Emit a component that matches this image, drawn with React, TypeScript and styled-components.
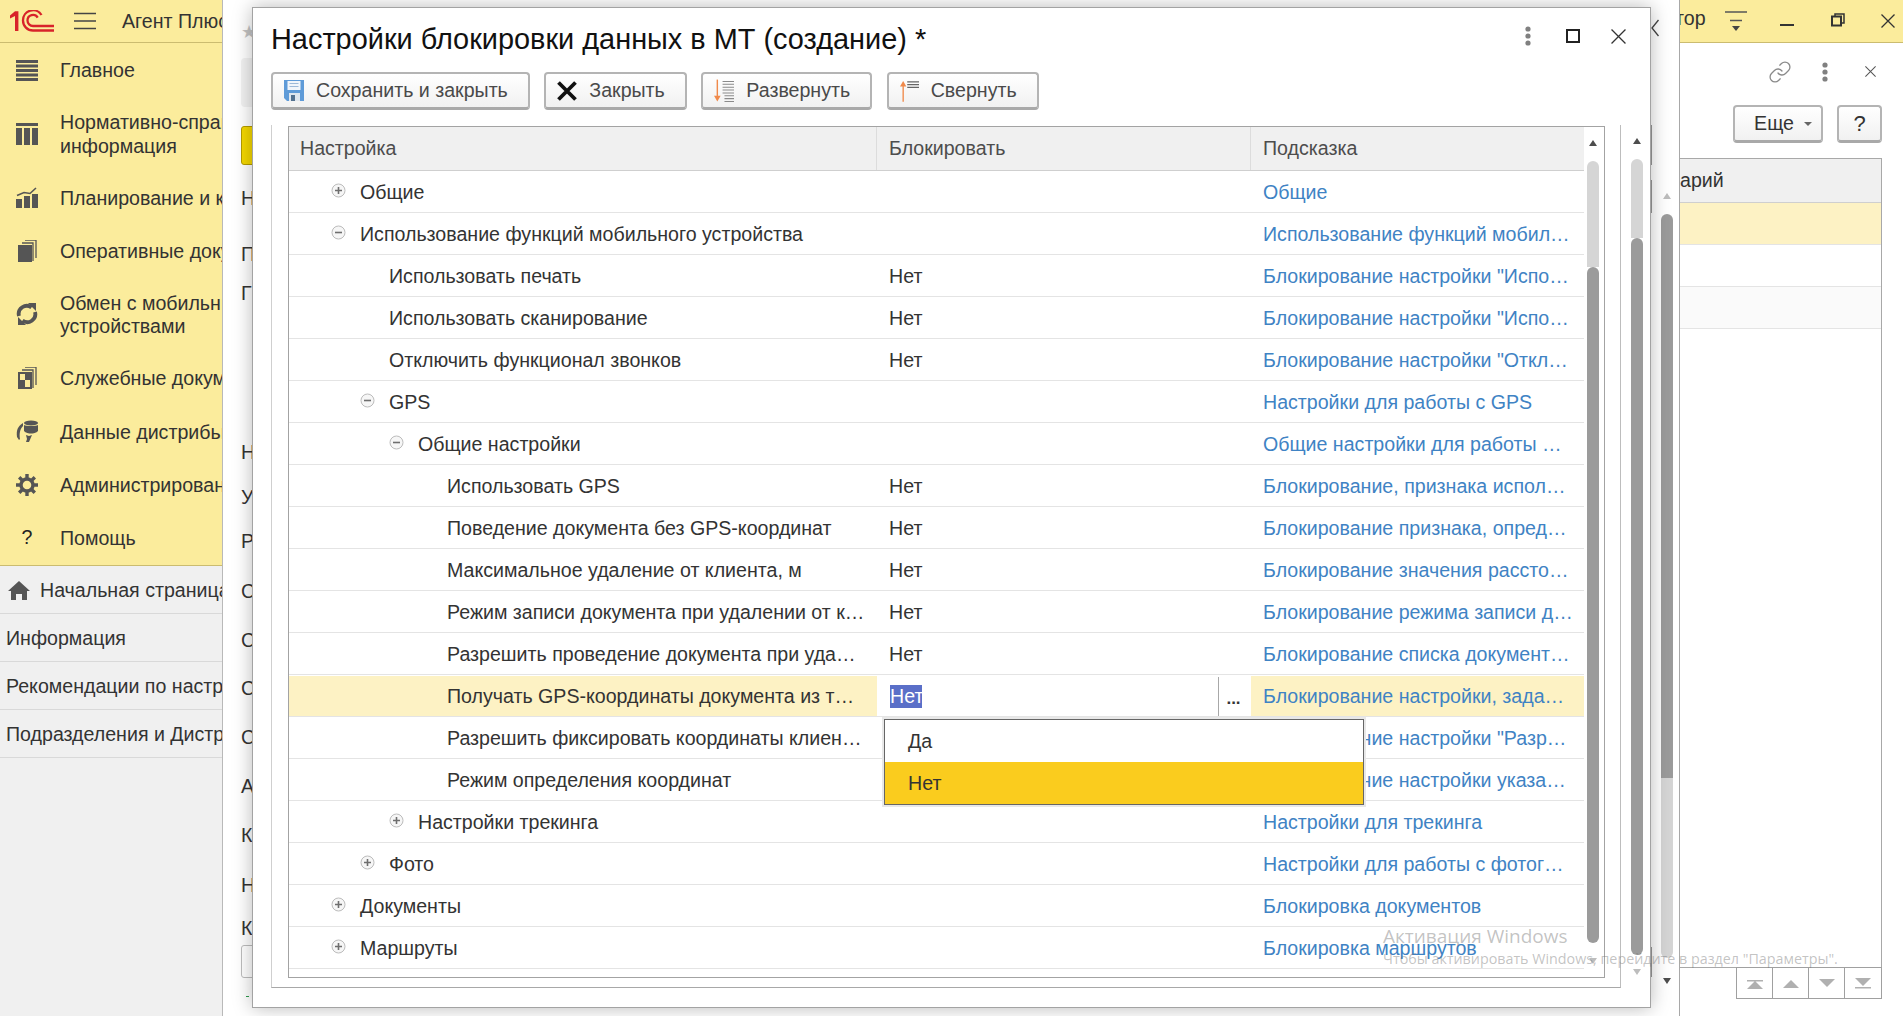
import React from "react";
import styled, { createGlobalStyle } from "styled-components";
import { Link as LinkIcon } from "lucide-react";

const Global = createGlobalStyle`
  html, body { margin: 0; padding: 0; width: 1903px; height: 1016px; overflow: hidden; background: #fff; }
  #root { width: 1903px; height: 1016px; }
  * { box-sizing: border-box; }
`;

const FONT = `"Liberation Sans", Arial, sans-serif`;
const TEXT = "#333333";
const LINE = "#e4e4e4";

const Page = styled.div`
  position: relative;
  display: flex;
  width: 1903px;
  height: 1016px;
  overflow: hidden;
  font-family: ${FONT};
  font-size: 19.6px;
  color: ${TEXT};
`;

/* ---------- sidebar ---------- */
const Sidebar = styled.aside`
  width: 223px;
  flex: none;
  display: flex;
  flex-direction: column;
  background: #f0f0f0;
  border-right: 1px solid #b9b9b9;
  overflow: hidden;
`;
const AppBar = styled.div`
  height: 43px;
  flex: none;
  display: flex;
  align-items: center;
  background: #fbec9c;
  border-bottom: 1px solid #cbbc70;
  padding-left: 10px;
  white-space: nowrap;
`;
const Burger = styled.svg`
  margin-left: 20px;
  margin-right: 26px;
  flex: none;
`;
const Nav = styled.nav`
  background: #fbec9c;
  height: 523px;
  flex: none;
  border-bottom: 1px solid #cbbc70;
`;
const NavItem = styled.div<{ $tall?: boolean }>`
  height: ${(p) => (p.$tall ? "74px" : "53.3px")};
  display: flex;
  align-items: center;
  gap: 22px;
  padding: 1px 0 0 16px;
  white-space: nowrap;
  line-height: 23.5px;
`;
const NavLabel = styled.span`
  padding-top: 2px;
`;
const NavGlyph = styled.svg`
  flex: none;
  width: 22px;
  height: 22px;
  color: #555;
`;
const HelpMark = styled.span`
  width: 22px;
  flex: none;
  text-align: center;
  color: #222;
`;
const Tab = styled.div`
  height: 48px;
  flex: none;
  display: flex;
  align-items: center;
  gap: 10px;
  padding: 1px 0 0 6px;
  border-bottom: 1px solid #d9d9d9;
  white-space: nowrap;
`;

/* ---------- background panel ---------- */
const Middle = styled.main`
  flex: 1;
  display: flex;
  justify-content: space-between;
  background: #fff;
  min-width: 0;
`;
const BackForm = styled.div`
  width: 40px;
  padding-left: 18px;
  display: flex;
  flex-direction: column;
`;
const BackStar = styled.span`
  margin-top: 22px;
  height: 20px;
  color: #c4c4c4;
  font-size: 18px;
  line-height: 20px;
`;
const BackBar = styled.div`
  margin-top: 16px;
  height: 49px;
  width: 30px;
  background: #f2f2f2;
  border-radius: 4px;
`;
const BackButton = styled.div`
  margin-top: 19px;
  height: 39px;
  width: 30px;
  background: #f5d800;
  border: 1px solid #b49c00;
  border-radius: 3px;
`;
const BackLetter = styled.div<{ $gap: number }>`
  margin-top: ${(p) => p.$gap}px;
  height: 24px;
  line-height: 24px;
`;
const BackInput = styled.div`
  margin-top: 5px;
  height: 33px;
  width: 30px;
  border: 1px solid #bdbdbd;
  border-radius: 3px;
`;
const BackDash = styled.div`
  margin: 18px 0 0 5px;
  width: 3px;
  height: 1px;
  background: #2e9c4e;
`;

const BackRail = styled.div`
  width: 28px;
  flex: none;
  display: flex;
  flex-direction: column;
  position: relative;
`;
const BackChevron = styled.svg`
  position: absolute;
  left: 0;
  top: 19px;
`;
const BackEdge = styled.div<{ $top: number; $h: number }>`
  position: absolute;
  left: 0;
  top: ${(p) => p.$top}px;
  width: 1px;
  height: ${(p) => p.$h}px;
  background: #9a9a9a;
`;
const BackScroll = styled.div`
  margin-top: 193px;
  padding-left: 10px;
`;

/* ---------- scrollbars ---------- */
const Scroll = styled.div<{ $pad: number }>`
  width: 12px;
  margin-left: ${(p) => p.$pad}px;
  display: flex;
  flex-direction: column;
  align-items: center;
`;
const Arrow = styled.div<{ $down?: boolean; $off?: boolean }>`
  width: 0;
  height: 0;
  border-left: 4px solid transparent;
  border-right: 4px solid transparent;
  ${(p) => (p.$down ? "border-top" : "border-bottom")}: 6px solid ${(p) => (p.$off ? "#bdbdbd" : "#4d4d4d")};
`;
const Lane = styled.div<{ $before: number; $after: number }>`
  width: 12px;
  display: flex;
  flex-direction: column;
  margin: ${(p) => p.$before}px 0 ${(p) => p.$after}px;
`;
const LaneLight = styled.div<{ $h: number; $atTop?: boolean }>`
  height: ${(p) => p.$h}px;
  background: #d5d5d5;
  border-radius: ${(p) => (p.$atTop ? "6px 6px 0 0" : "0 0 6px 6px")};
`;
const LaneDark = styled.div<{ $h: number; $roundBottom?: boolean }>`
  height: ${(p) => p.$h}px;
  background: #9b9b9b;
  border-radius: 6px 6px ${(p) => (p.$roundBottom ? "6px 6px" : "0 0")};
`;

/* ---------- right panel ---------- */
const Right = styled.section`
  width: 224px;
  flex: none;
  border-left: 1px solid #a8a8a8;
  display: flex;
  flex-direction: column;
  background: #fff;
`;
const RightBar = styled.div`
  height: 43px;
  flex: none;
  background: #fbec9c;
  border-bottom: 1px solid #cbbc70;
  display: grid;
  grid-template-columns: 45px 55px 51px 50px 22px;
  align-items: center;
  overflow: hidden;
`;
const RightBarText = styled.span`
  margin: 0 0 5px -5px;
  white-space: nowrap;
`;
const RightTools = styled.div`
  height: 62px;
  flex: none;
  padding: 0 27px 5px 0;
  display: flex;
  justify-content: flex-end;
  align-items: center;
  gap: 30px;
`;
const CloseSpacer = styled.span`
  display: flex;
  margin-left: 7px;
`;
const RightActions = styled.div`
  height: 38px;
  flex: none;
  padding-right: 21px;
  display: flex;
  justify-content: flex-end;
  gap: 14px;
`;
const RightTable = styled.div`
  flex: 1;
  margin: 15px 21px 0 0;
  border-top: 1px solid #a8a8a8;
  border-right: 1px solid #a8a8a8;
  border-bottom: 1px solid #a8a8a8;
  overflow: hidden;
`;
const RightHead = styled.div`
  height: 44px;
  background: #f0f0f0;
  border-bottom: 1px solid #cfcfcf;
  line-height: 43px;
`;
const RightRow = styled.div<{ $bg: string }>`
  height: 42px;
  background: ${(p) => p.$bg};
  border-bottom: 1px solid ${LINE};
`;
const Pager = styled.div`
  align-self: flex-end;
  margin-right: 21px;
  height: 32px;
  margin-bottom: 17px;
  display: grid;
  grid-template-columns: repeat(4, 36px);
  margin-top: -1px;
  border: 1px solid #a0a0a0;
`;
const PagerCell = styled.div`
  display: flex;
  align-items: center;
  justify-content: center;
  border-right: 1px solid #a0a0a0;
  &:last-child { border-right: 0; }
`;

/* ---------- modal ---------- */
const Modal = styled.div`
  position: absolute;
  left: 252px;
  top: 7px;
  width: 1399px;
  height: 1001px;
  background: #fff;
  border: 1px solid #a3a3a3;
  box-shadow: 0 0 18px rgba(0, 0, 0, 0.28);
  display: flex;
  flex-direction: column;
`;
const TitleRow = styled.div`
  height: 64px;
  flex: none;
  display: flex;
  align-items: center;
  padding: 0 24px 2px 18px;
`;
const Title = styled.h1`
  margin: 0;
  flex: 1;
  font-weight: 400;
  font-size: 28.9px;
  color: #111;
`;
const WindowButtons = styled.div`
  display: flex;
  align-items: center;
  gap: 31px;
  padding-bottom: 6px;
  & > :first-child { margin-right: 4px; }
`;
const Toolbar = styled.div`
  height: 38px;
  flex: none;
  display: flex;
  gap: 14.5px;
  padding-left: 18px;
`;
const Button = styled.div`
  height: 38px;
  display: flex;
  align-items: center;
  gap: 12px;
  padding: 0 20px 0 11px;
  border: 2px solid #b4b4b4;
  border-bottom: 3px solid #a9a9a9;
  border-radius: 4px;
  background: linear-gradient(#ffffff, #f1f1f1);
  color: #4a4a4a;
  white-space: nowrap;
`;
const PlainButton = styled(Button)<{ $w: number; $pl?: number; $big?: boolean }>`
  width: ${(p) => p.$w}px;
  padding: 0 0 0 ${(p) => p.$pl || 0}px;
  justify-content: center;
  gap: 10px;
  color: #333;
  font-size: ${(p) => (p.$big ? "22px" : "inherit")};
`;
const Caret = styled.span`
  width: 0;
  height: 0;
  border-left: 4px solid transparent;
  border-right: 4px solid transparent;
  border-top: 4px solid #666;
`;
const ModalBody = styled.div`
  flex: 1;
  display: flex;
  margin: 15px 0 19px 18px;
  min-height: 0;
`;
const Frame = styled.div`
  width: 1350px;
  flex: none;
  padding: 1px 15px 9px 16px;
  border-left: 1px solid #cfcfcf;
  border-right: 1px solid #bdbdbd;
  border-bottom: 1px solid #a8a8a8;
`;
const TableBox = styled.div`
  height: 100%;
  display: flex;
  border: 1px solid #a3a3a3;
  background: #fff;
`;
const Grid = styled.div`
  width: 1295px;
  flex: none;
  position: relative;
`;
const COLS = "588px 374px 333px";
const HeadRow = styled.div`
  height: 44px;
  display: grid;
  grid-template-columns: ${COLS};
  background: #f0f0f0;
  border-bottom: 1px solid #cfcfcf;
`;
const HeadCell = styled.div`
  display: flex;
  align-items: center;
  padding-left: 12px;
  color: #4d4d4d;
  border-right: 1px solid #dcdcdc;
  &:first-child { padding-left: 11px; }
  &:last-child { border-right: 0; }
`;
const Row = styled.div`
  height: 42px;
  display: grid;
  grid-template-columns: ${COLS};
  border-bottom: 1px solid ${LINE};
`;
const Cell = styled.div<{ $active?: boolean }>`
  display: flex;
  align-items: center;
  min-width: 0;
  overflow: hidden;
  white-space: nowrap;
  margin: 1px 0 0;
  padding-top: 1px;
  background: ${(p) => (p.$active ? "#fdf2c4" : "transparent")};
`;
const NameCell = styled(Cell)<{ $level: number }>`
  padding-left: ${(p) => 71 + p.$level * 29}px;
  position: relative;
`;
const Toggle = styled.svg`
  position: absolute;
  margin-left: -29px;
  margin-top: -4px;
`;
const ValueCell = styled(Cell)`
  padding-left: 12px;
`;
const HintCell = styled(Cell)`
  padding-left: 12px;
  color: #3f83c4;
`;
const EditorCell = styled(Cell)`
  padding-left: 13px;
  padding-top: 0;
  background: #fff;
`;
const Selected = styled.span`
  flex: none;
  width: 32px;
  height: 23px;
  line-height: 23px;
  background: #5a6fc8;
  color: #fff;
  margin-right: 296px;
  overflow: hidden;
`;
const EditorPick = styled.div`
  flex: none;
  width: 32px;
  height: 39px;
  padding-right: 2px;
  border-left: 1px solid #a8a8a8;
  text-align: center;
  font-weight: 700;
  font-size: 17px;
  line-height: 44px;
  color: #333;
`;
const Dropdown = styled.div`
  position: absolute;
  left: 595px;
  top: 592px;
  width: 480px;
  height: 86px;
  background: #fff;
  border: 1px solid #666;
  box-shadow: 0 0 0 2px #e8e8e8;
  z-index: 2;
`;
const DropItem = styled.div<{ $on?: boolean }>`
  height: 42px;
  padding-left: 23px;
  display: flex;
  align-items: center;
  background: ${(p) => (p.$on ? "#facc1e" : "#fff")};
`;
const TableRail = styled.div`
  width: 20px;
  flex: none;
  padding-top: 13px;
`;
const ModalRail = styled.div`
  width: 29px;
  flex: none;
  padding-top: 13px;
`;

/* ---------- watermark ---------- */
const Watermark = styled.div`
  position: absolute;
  left: 1383px;
  top: 923px;
  z-index: 5;
  pointer-events: none;
  font-family: "Open Sans", ${FONT};
  color: rgba(110, 110, 110, 0.42);
  white-space: nowrap;
`;
const WmTitle = styled.div`
  font-size: 19px;
  line-height: 26px;
`;
const WmText = styled.div`
  font-size: 14.3px;
  line-height: 20px;
`;

/* ---------- drawings ---------- */
const Logo = () => (
  <svg width="44" height="22" viewBox="10 8 44 22" fill="none" style={{ flex: "none" }}>
    <path d="M10 13.5 15 9.2h3.400V29H15V14l-5 2.400z" fill="#d8232a" />
    <path d="M41.500 13A10 10 0 0 0 23 18.500 10 10 0 0 0 33 28.500H54" stroke="#d8232a" strokeWidth="2.300" />
    <path d="M37.700 15.600A5.500 5.500 0 0 0 27.500 18.500 5.500 5.500 0 0 0 33 24H54" stroke="#d8232a" strokeWidth="2.300" />
  </svg>
);
const IconMain = () => (
  <NavGlyph viewBox="0 0 22 22" fill="currentColor">
    <rect y="1" width="22" height="3" /><rect y="5.5" width="22" height="3" /><rect y="10" width="22" height="3" /><rect y="14.5" width="22" height="3" /><rect y="19" width="22" height="3" />
  </NavGlyph>
);
const IconRef = () => (
  <NavGlyph viewBox="0 0 22 22" fill="currentColor">
    <rect y="0" width="22" height="3" />
    <rect y="5" width="6" height="17" /><rect x="8" y="5" width="6" height="17" /><rect x="16" y="5" width="6" height="17" />
  </NavGlyph>
);
const IconPlan = () => (
  <NavGlyph viewBox="0 0 22 22" fill="currentColor">
    <rect y="13" width="6" height="9" /><rect x="8" y="10" width="6" height="12" /><rect x="16" y="8" width="6" height="14" />
    <path d="M1 9.5 8 6.5l6 1L20 2" fill="none" stroke="currentColor" strokeWidth="1.6" />
  </NavGlyph>
);
const IconDocs = () => (
  <NavGlyph viewBox="0 0 22 22" fill="currentColor">
    <rect x="2" y="5" width="14" height="17" />
    <path d="M17 21V3H6M20 18V0H9" fill="none" stroke="currentColor" strokeWidth="1.3" />
  </NavGlyph>
);
const IconSync = () => (
  <NavGlyph viewBox="0 0 22 22" fill="none">
    <path d="M3 13A8 8 0 0 1 15.5 4.5" stroke="currentColor" strokeWidth="3.8" />
    <path d="M19 9A8 8 0 0 1 6.5 17.5" stroke="currentColor" strokeWidth="3.8" />
    <path d="M12 0h8v8zM10 22H2v-8z" fill="currentColor" />
  </NavGlyph>
);
const IconService = () => (
  <NavGlyph viewBox="0 0 22 22" fill="currentColor">
    <path fillRule="evenodd" d="M2 5h14v17H2zM4 7v6h5V7zM9 13v7h5v-7z" />
    <path d="M17 21V3H6M20 18V0H9" fill="none" stroke="currentColor" strokeWidth="1.3" />
  </NavGlyph>
);
const IconData = () => (
  <NavGlyph viewBox="0 0 22 22" fill="currentColor">
    <ellipse cx="15" cy="3" rx="7" ry="2.6" />
    <path d="M8 5c2 1.4 12 1.4 14 0v6c-1.5 2-5 2.6-7 2.6S9.500 13 8 11z" />
    <path d="M7 3C2 6 0 10 1 17l2 3 1-1c-1-5 0-10 3-13z" />
    <path d="M10 15l3 1 3-1-3 7h-3l1-3z" />
  </NavGlyph>
);
const IconGear = () => (
  <NavGlyph viewBox="0 0 22 22" fill="none">
    <circle cx="11" cy="11" r="6" stroke="currentColor" strokeWidth="3.4" />
    <path d="M11 0v5M11 17v5M0 11h5M17 11h5M3.200 3.200l3.500 3.500M15.300 15.300l3.500 3.500M3.200 18.800l3.500-3.500M15.300 6.700l3.500-3.500" stroke="currentColor" strokeWidth="3.400" />
  </NavGlyph>
);
const IconHome = () => (
  <svg width="22" height="19" viewBox="0 0 22 19" fill="#555" style={{ flex: "none", marginLeft: 2 }}>
    <path d="M11 0 22 10h-3v9h-5v-6H8v6H3v-9H0z" />
  </svg>
);
const IconSave = () => (
  <svg width="20" height="21" viewBox="0 0 20 21" style={{ flex: "none" }}>
    <path d="M0 0h20v21H3l-3-3z" fill="#5f9bd8" />
    <rect x="3.500" y="1" width="13" height="9" fill="#f1f5fa" />
    <path d="M5.500 3.500h9M5.500 6.500h9" stroke="#9db9d8" strokeWidth="1" />
    <rect x="5" y="13" width="11" height="8" fill="#dfe6ee" />
    <rect x="7" y="15" width="4" height="6" fill="#53718f" />
  </svg>
);
const IconClose = () => (
  <svg width="20" height="20" viewBox="0 0 20 20" style={{ flex: "none" }}>
    <path d="M1.500 1.500 18.500 18.500M18.500 1.500 1.500 18.500" stroke="#111" strokeWidth="3.800" />
  </svg>
);
const IconExpand = () => (
  <svg width="20" height="24" viewBox="0 0 21 24" style={{ flex: "none" }}>
    <path d="M3.500 0v18" stroke="#f08a4b" strokeWidth="1.500" />
    <path d="M0 17h7l-3.500 6z" fill="#f08a4b" />
    <path d="M9 2h12M9 5h12M9 8h12M9 11h12M9 14h12M11 17h10M11 20h10M11 23h10" stroke="#8a8a8a" strokeWidth="1.100" />
  </svg>
);
const IconCollapse = () => (
  <svg width="19" height="24" viewBox="0 0 21 24" style={{ flex: "none" }}>
    <path d="M3.500 6v18" stroke="#f08a4b" strokeWidth="1.500" />
    <path d="M0 7h7L3.500 1z" fill="#f08a4b" />
    <path d="M8 2h13M8 5h13M8 8h13" stroke="#666" strokeWidth="1.300" />
  </svg>
);
const ToggleIcon = ({ open }: { open: boolean }) => (
  <Toggle width="15" height="15" viewBox="0 0 15 15">
    <circle cx="7.500" cy="7.500" r="6.500" fill="#f6f6f6" stroke="#bcbcbc" />
    <path d={open ? "M4 7.500h7" : "M4 7.500h7M7.500 4v7"} stroke="#6e6e6e" strokeWidth="1.600" />
  </Toggle>
);
const Dots = ({ gap = 7 }: { gap?: number }) => (
  <svg width="6" height={2 * gap + 6} viewBox={`0 0 6 ${2 * gap + 6}`} fill="#808080" style={{ flex: "none" }}>
    <circle cx="3" cy="3" r="2.600" /><circle cx="3" cy={3 + gap} r="2.600" /><circle cx="3" cy={3 + 2 * gap} r="2.600" />
  </svg>
);
const Cross = ({ size, color, w }: { size: number; color: string; w: number }) => (
  <svg width={size} height={size} viewBox="0 0 14 14" style={{ flex: "none" }}>
    <path d="M.5.500l13 13M13.500.500l-13 13" stroke={color} strokeWidth={w} />
  </svg>
);
const PagerGlyph = ({ d }: { d: string }) => (
  <svg width="16" height="11" viewBox="0 0 16 11" fill="#b0b0b0"><path d={d} /></svg>
);

const backLetters: [string, number][] = [
  ["Н", 21], ["П", 32], ["Г", 15], ["Н", 135], ["У", 21], ["Р", 20], ["С", 26], ["С", 25], ["С", 24],
  ["С", 25], ["А", 25], ["К", 25], ["Н", 26], ["К", 19],
];

type R = { level: number; toggle?: "open" | "closed"; name: string; value?: string; hint: string };
const rows: R[] = [
  { level: 0, toggle: "closed", name: "Общие", hint: "Общие" },
  { level: 0, toggle: "open", name: "Использование функций мобильного устройства", hint: "Использование функций мобил…" },
  { level: 1, name: "Использовать печать", value: "Нет", hint: "Блокирование настройки \"Испо…" },
  { level: 1, name: "Использовать сканирование", value: "Нет", hint: "Блокирование настройки \"Испо…" },
  { level: 1, name: "Отключить функционал звонков", value: "Нет", hint: "Блокирование настройки \"Откл…" },
  { level: 1, toggle: "open", name: "GPS", hint: "Настройки для работы с GPS" },
  { level: 2, toggle: "open", name: "Общие настройки", hint: "Общие настройки для работы …" },
  { level: 3, name: "Использовать GPS", value: "Нет", hint: "Блокирование, признака испол…" },
  { level: 3, name: "Поведение документа без GPS-координат", value: "Нет", hint: "Блокирование признака, опред…" },
  { level: 3, name: "Максимальное удаление от клиента, м", value: "Нет", hint: "Блокирование значения рассто…" },
  { level: 3, name: "Режим записи документа при удалении от к…", value: "Нет", hint: "Блокирование режима записи д…" },
  { level: 3, name: "Разрешить проведение документа при уда…", value: "Нет", hint: "Блокирование списка документ…" },
  { level: 3, name: "Получать GPS-координаты документа из т…", value: "Нет", hint: "Блокирование настройки, зада…" },
  { level: 3, name: "Разрешить фиксировать координаты клиен…", hint: "Блокирование настройки \"Разр…" },
  { level: 3, name: "Режим определения координат", hint: "Блокирование настройки указа…" },
  { level: 2, toggle: "closed", name: "Настройки трекинга", hint: "Настройки для трекинга" },
  { level: 1, toggle: "closed", name: "Фото", hint: "Настройки для работы с фотог…" },
  { level: 0, toggle: "closed", name: "Документы", hint: "Блокировка документов" },
  { level: 0, toggle: "closed", name: "Маршруты", hint: "Блокировка маршрутов" },
];
const ACTIVE = 12;

export default function App() {
  return (
    <Page>
      <Global />
      <Sidebar>
        <AppBar>
          <Logo />
          <Burger width="22" height="18" viewBox="0 0 22 18">
            <path d="M0 1.500h22M0 9h22M0 16.500h22" stroke="#444" strokeWidth="1.300" />
          </Burger>
          Агент Плюс
        </AppBar>
        <Nav>
          <NavItem><IconMain /><NavLabel>Главное</NavLabel></NavItem>
          <NavItem $tall><IconRef /><NavLabel>Нормативно-справочная<br />информация</NavLabel></NavItem>
          <NavItem><IconPlan /><NavLabel>Планирование и контроль</NavLabel></NavItem>
          <NavItem><IconDocs /><NavLabel>Оперативные документы</NavLabel></NavItem>
          <NavItem $tall><IconSync /><NavLabel>Обмен с мобильными<br />устройствами</NavLabel></NavItem>
          <NavItem><IconService /><NavLabel>Служебные документы</NavLabel></NavItem>
          <NavItem><IconData /><NavLabel>Данные дистрибьюторов</NavLabel></NavItem>
          <NavItem><IconGear /><NavLabel>Администрирование</NavLabel></NavItem>
          <NavItem><HelpMark>?</HelpMark><NavLabel>Помощь</NavLabel></NavItem>
        </Nav>
        <Tab><IconHome />Начальная страница</Tab>
        <Tab>Информация</Tab>
        <Tab>Рекомендации по настройке</Tab>
        <Tab>Подразделения и Дистрибьюторы</Tab>
      </Sidebar>

      <Middle>
        <BackForm>
          <BackStar>★</BackStar>
          <BackBar />
          <BackButton />
          {backLetters.map(([l, g], i) => (
            <BackLetter key={i} $gap={g}>{l}</BackLetter>
          ))}
          <BackInput />
          <BackDash />
        </BackForm>
        <BackRail>
          <BackChevron width="8" height="18" viewBox="0 0 8 18">
            <path d="M7.500 1 1 9l6.500 8" fill="none" stroke="#444" strokeWidth="1.300" />
          </BackChevron>
          <BackEdge $top={125} $h={40} />
          <BackEdge $top={180} $h={33} />
          <BackEdge $top={947} $h={30} />
          <BackScroll>
            <Scroll $pad={0}>
              <Arrow $off />
              <Lane $before={15} $after={20}>
                <LaneDark $h={564} />
                <LaneLight $h={180} />
              </Lane>
              <Arrow $down />
            </Scroll>
          </BackScroll>
        </BackRail>
      </Middle>

      <Right>
        <RightBar>
          <RightBarText>тор</RightBarText>
          <svg width="22" height="22" viewBox="0 0 22 22">
            <path d="M0 2h22M5 10.500h12" stroke="#555" strokeWidth="1.300" />
            <path d="M7 16h8l-4 5z" fill="#444" />
          </svg>
          <svg width="14" height="18" viewBox="0 0 14 18">
            <path d="M0 13h14" stroke="#333" strokeWidth="2" />
          </svg>
          <svg width="14" height="14" viewBox="0 0 14 14" fill="none" stroke="#333" style={{ marginBottom: 2 }}>
            <path d="M4 3V1h9v9h-3" strokeWidth="1.500" />
            <rect x="1" y="3.500" width="9" height="9" strokeWidth="2" />
          </svg>
          <Cross size={14} color="#333" w={1.3} />
        </RightBar>
        <RightTools>
          <LinkIcon size={24} color="#8a8a8a" strokeWidth={1.3} />
          <Dots />
          <CloseSpacer><Cross size={11} color="#555" w={1.3} /></CloseSpacer>
        </RightTools>
        <RightActions>
          <PlainButton $w={90} $pl={10}>Еще<Caret /></PlainButton>
          <PlainButton $w={45} $big>?</PlainButton>
        </RightActions>
        <RightTable>
          <RightHead>арий</RightHead>
          <RightRow $bg="#fdf2c4" />
          <RightRow $bg="#fff" />
          <RightRow $bg="#fafafa" />
        </RightTable>
        <Pager>
          <PagerCell><PagerGlyph d="M0 2h16v1.500H0zM8 3l8 8H0z" /></PagerCell>
          <PagerCell><PagerGlyph d="M8 2l8 8H0z" /></PagerCell>
          <PagerCell><PagerGlyph d="M0 1h16L8 9z" /></PagerCell>
          <PagerCell><PagerGlyph d="M0 0h16L8 8zM0 9h16v1.500H0z" /></PagerCell>
        </Pager>
      </Right>

      <Modal>
        <TitleRow>
          <Title>Настройки блокировки данных в МТ (создание) *</Title>
          <WindowButtons>
            <Dots />
            <svg width="14" height="14" viewBox="0 0 14 14" fill="none">
              <rect x="1" y="1" width="12" height="12" stroke="#222" strokeWidth="2" />
            </svg>
            <Cross size={15} color="#333" w={1.2} />
          </WindowButtons>
        </TitleRow>
        <Toolbar>
          <Button><IconSave />Сохранить и закрыть</Button>
          <Button><IconClose />Закрыть</Button>
          <Button><IconExpand />Развернуть</Button>
          <Button><IconCollapse />Свернуть</Button>
        </Toolbar>
        <ModalBody>
          <Frame>
            <TableBox>
              <Grid>
                <HeadRow>
                  <HeadCell>Настройка</HeadCell>
                  <HeadCell>Блокировать</HeadCell>
                  <HeadCell>Подсказка</HeadCell>
                </HeadRow>
                {rows.map((r, i) => {
                  const active = i === ACTIVE;
                  return (
                    <Row key={i}>
                      <NameCell $level={r.level} $active={active}>
                        {r.toggle && <ToggleIcon open={r.toggle === "open"} />}
                        {r.name}
                      </NameCell>
                      {active ? (
                        <EditorCell>
                          <Selected>Нет</Selected>
                          <EditorPick>...</EditorPick>
                        </EditorCell>
                      ) : (
                        <ValueCell>{r.value}</ValueCell>
                      )}
                      <HintCell $active={active}>{r.hint}</HintCell>
                    </Row>
                  );
                })}
                <Dropdown>
                  <DropItem>Да</DropItem>
                  <DropItem $on>Нет</DropItem>
                </Dropdown>
              </Grid>
              <TableRail>
                <Scroll $pad={3}>
                  <Arrow />
                  <Lane $before={15} $after={15}>
                    <LaneLight $h={106} $atTop />
                    <LaneDark $h={676} $roundBottom />
                  </Lane>
                  <Arrow $down $off />
                </Scroll>
              </TableRail>
            </TableBox>
          </Frame>
          <ModalRail>
            <Scroll $pad={10}>
              <Arrow />
              <Lane $before={15} $after={14}>
                <LaneLight $h={79} $atTop />
                <LaneDark $h={717} $roundBottom />
              </Lane>
              <Arrow $down $off />
            </Scroll>
          </ModalRail>
        </ModalBody>
      </Modal>

      <Watermark>
        <WmTitle>Активация Windows</WmTitle>
        <WmText>Чтобы активировать Windows, перейдите в раздел "Параметры".</WmText>
      </Watermark>
    </Page>
  );
}
